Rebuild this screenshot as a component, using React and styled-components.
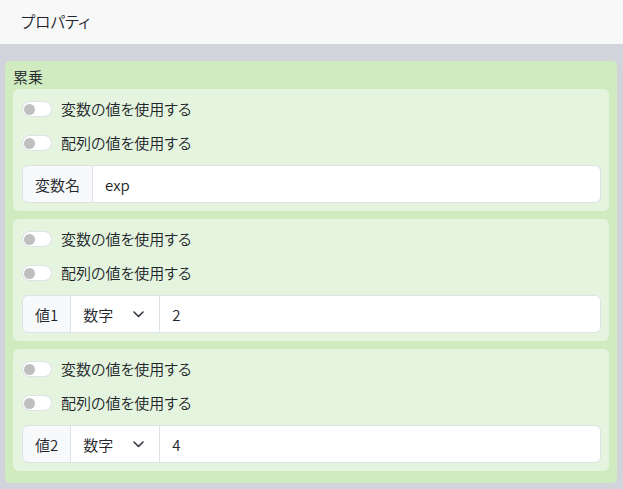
import React from "react";
import styled, { createGlobalStyle } from "styled-components";

const GlobalStyle = createGlobalStyle`
  html, body {
    margin: 0;
    padding: 0;
    height: 100%;
  }
  body {
    font-family: "Noto Sans CJK JP", "Noto Sans", sans-serif;
    font-feature-settings: "palt";
    font-size: 15px;
    font-weight: 350;
    color: #212529;
    background: #d1d5db;
  }
`;

const Page = styled.div`
  width: 623px;
  height: 489px;
  display: flex;
  flex-direction: column;
  background: #d1d5db;
`;

const Header = styled.header`
  height: 44px;
  flex: none;
  display: flex;
  align-items: center;
  padding: 0 21px 2px;
  box-sizing: border-box;
  background: #f8f8f8;
  font-size: 15.5px;
`;

const Body = styled.main`
  flex: 1;
  padding: 17px 6px 6px 5px;
  display: flex;
  flex-direction: column;
`;

const Panel = styled.section`
  background: #d1ebc1;
  border-radius: 5px;
  padding: 0 8px 12px 8px;
  display: flex;
  flex-direction: column;
  gap: 8px;
`;

const PanelTitle = styled.div`
  padding-top: 4px;
  line-height: 24px;
  margin-bottom: -8px;
`;

const Card = styled.div`
  background: #e5f4df;
  border-radius: 6px;
  padding: 8px 8px 8px 9px;
  display: flex;
  flex-direction: column;
`;

const SwitchRow = styled.label`
  display: flex;
  align-items: center;
  height: 24px;
  gap: 9px;
  margin-bottom: 10px;
  line-height: 24px;
`;

const Track = styled.span`
  width: 30px;
  height: 16px;
  box-sizing: border-box;
  border: 1px solid #dee2e6;
  border-radius: 8px;
  background: #fff;
  display: flex;
  align-items: center;
  padding-left: 1px;
  flex: none;
`;

const Knob = styled.span`
  width: 11px;
  height: 11px;
  border-radius: 50%;
  background: #bfbfbf;
`;

const InputGroup = styled.div`
  display: flex;
  height: 38px;
  box-sizing: border-box;
`;

const GroupLabel = styled.div`
  flex: none;
  display: flex;
  align-items: center;
  padding: 0 12px;
  background: #f8f9fa;
  border: 1px solid #dee2e6;
  border-radius: 6px 0 0 6px;
`;

const SelectBox = styled.div`
  flex: none;
  width: 89px;
  box-sizing: border-box;
  display: flex;
  align-items: center;
  justify-content: space-between;
  padding: 0 15px 0 12px;
  background: #fff;
  border: 1px solid #dee2e6;
  border-left: none;
`;

const TextValue = styled.div`
  flex: 1;
  display: flex;
  align-items: center;
  padding: 0 12px;
  background: #fff;
  border: 1px solid #dee2e6;
  border-left: none;
  border-radius: 0 6px 6px 0;
`;

const Chevron = () => (
  <svg width="11" height="7" viewBox="0 0 11 7" fill="none">
    <path
      d="M1 1l4.5 4.5L10 1"
      stroke="#343a40"
      strokeWidth="1.6"
      strokeLinecap="round"
      strokeLinejoin="round"
    />
  </svg>
);

const Toggle = ({ label }) => (
  <SwitchRow>
    <Track>
      <Knob />
    </Track>
    {label}
  </SwitchRow>
);

const blocks = [
  { label: "変数名", value: "exp" },
  { label: "値1", type: "数字", value: "2" },
  { label: "値2", type: "数字", value: "4" }
];

export default function App() {
  return (
    <Page>
      <GlobalStyle />
      <Header>プロパティ</Header>
      <Body>
        <Panel>
          <PanelTitle>累乗</PanelTitle>
          {blocks.map((b) => (
            <Card key={b.label}>
              <Toggle label="変数の値を使用する" />
              <Toggle label="配列の値を使用する" />
              <InputGroup>
                <GroupLabel>{b.label}</GroupLabel>
                {b.type && (
                  <SelectBox>
                    {b.type}
                    <Chevron />
                  </SelectBox>
                )}
                <TextValue>{b.value}</TextValue>
              </InputGroup>
            </Card>
          ))}
        </Panel>
      </Body>
    </Page>
  );
}
